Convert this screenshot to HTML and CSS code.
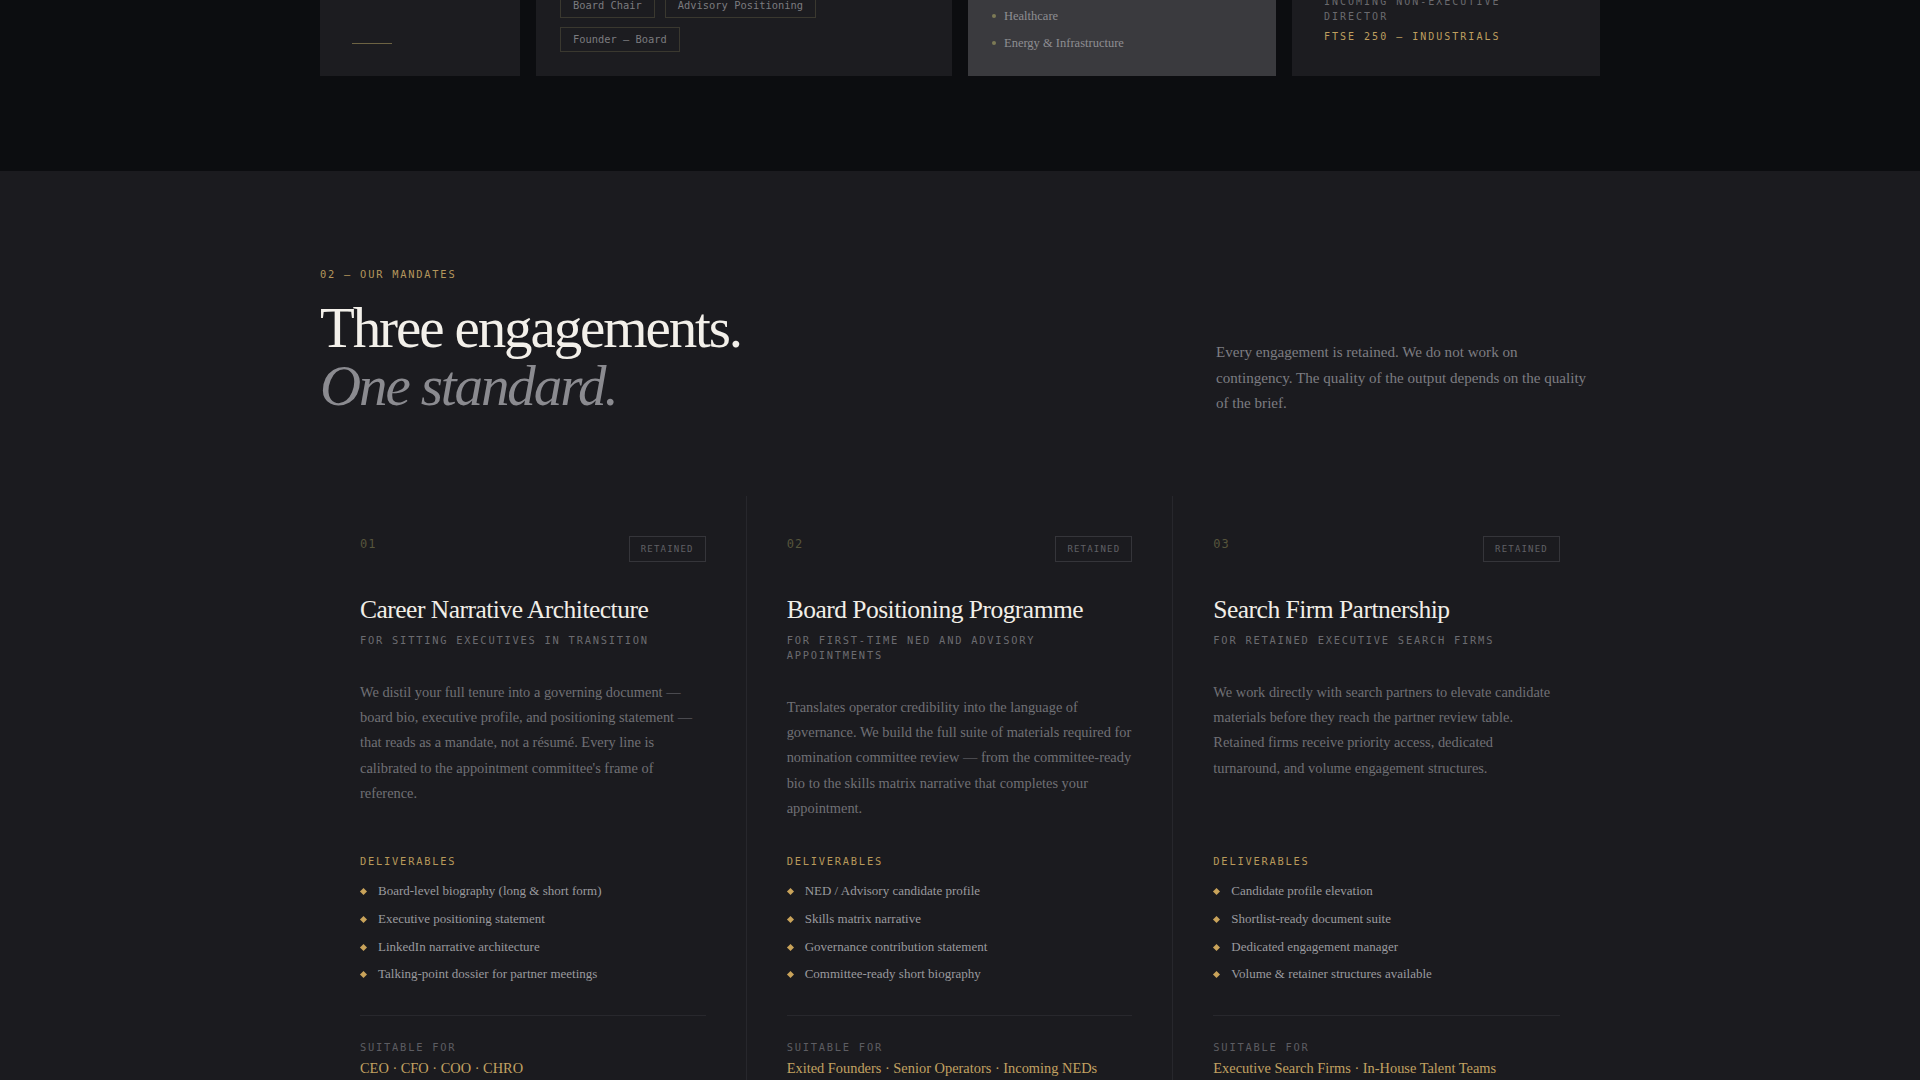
FILE: index.html
```html
<!DOCTYPE html>
<html lang="en">
<head>
  <meta charset="UTF-8" />
  <meta name="viewport" content="width=device-width, initial-scale=1.0" />
  <title>Mandates</title>
  <link rel="stylesheet" href="styles.css">
</head>
<body>

  <!-- tail of the profile strip above -->
  <section class="strip">
    <div class="wrap strip-grid">
      <div class="tile tile-stat">
        <div class="stat-num">94%</div>
        <div class="tile-label">Shortlist rate</div>
        <span class="rule"></span>
      </div>

      <div class="tile">
        <div class="tile-label">Transitions</div>
        <div class="tags">
          <span class="tag">Executive — NED</span>
          <span class="tag">Operator — Investor</span>
          <span class="tag">Board Chair</span>
          <span class="tag">Advisory Positioning</span>
          <span class="tag">Founder — Board</span>
        </div>
      </div>

      <div class="tile tile-lit">
        <div class="tile-label">Sectors</div>
        <ul class="dots">
          <li>Financial Services</li>
          <li>Technology</li>
          <li>Healthcare</li>
          <li>Energy &amp; Infrastructure</li>
        </ul>
      </div>

      <div class="tile tile-wide">
        <div class="tile-label">Recent mandate</div>
        <p class="role">Incoming Non-Executive Director</p>
        <p class="index">FTSE 250 — Industrials</p>
      </div>
    </div>
  </section>

  <section class="mandates">
    <div class="wrap">
      <header class="mandates-head">
        <div>
          <p class="eyebrow">02 — Our Mandates</p>
          <h2 class="headline">Three engagements.<br><em>One standard.</em></h2>
        </div>
        <p class="intro">Every engagement is retained. We do not work on contingency. The quality of the output depends on the quality of the brief.</p>
      </header>

      <div class="mandate-grid">
        <article class="mandate">
          <div class="mandate-top">
            <span class="mandate-no">01</span>
            <span class="badge">Retained</span>
          </div>
          <h3>Career Narrative Architecture</h3>
          <p class="mandate-for">For sitting executives in transition</p>
          <p class="mandate-desc">We distil your full tenure into a governing document — board bio, executive profile, and positioning statement — that reads as a mandate, not a résumé. Every line is calibrated to the appointment committee's frame of reference.</p>
          <div class="deliv">
            <p class="label-gold">Deliverables</p>
            <ul class="diamonds">
              <li>Board-level biography (long &amp; short form)</li>
              <li>Executive positioning statement</li>
              <li>LinkedIn narrative architecture</li>
              <li>Talking-point dossier for partner meetings</li>
            </ul>
          </div>
          <div class="suited">
            <p class="label-dim">Suitable for</p>
            <p class="suited-list">CEO · CFO · COO · CHRO</p>
          </div>
        </article>

        <article class="mandate">
          <div class="mandate-top">
            <span class="mandate-no">02</span>
            <span class="badge">Retained</span>
          </div>
          <h3>Board Positioning Programme</h3>
          <p class="mandate-for">For first-time NED and advisory appointments</p>
          <p class="mandate-desc">Translates operator credibility into the language of governance. We build the full suite of materials required for nomination committee review — from the committee-ready bio to the skills matrix narrative that completes your appointment.</p>
          <div class="deliv">
            <p class="label-gold">Deliverables</p>
            <ul class="diamonds">
              <li>NED / Advisory candidate profile</li>
              <li>Skills matrix narrative</li>
              <li>Governance contribution statement</li>
              <li>Committee-ready short biography</li>
            </ul>
          </div>
          <div class="suited">
            <p class="label-dim">Suitable for</p>
            <p class="suited-list">Exited Founders · Senior Operators · Incoming NEDs</p>
          </div>
        </article>

        <article class="mandate">
          <div class="mandate-top">
            <span class="mandate-no">03</span>
            <span class="badge">Retained</span>
          </div>
          <h3>Search Firm Partnership</h3>
          <p class="mandate-for">For retained executive search firms</p>
          <p class="mandate-desc">We work directly with search partners to elevate candidate materials before they reach the partner review table. Retained firms receive priority access, dedicated turnaround, and volume engagement structures.</p>
          <div class="deliv">
            <p class="label-gold">Deliverables</p>
            <ul class="diamonds">
              <li>Candidate profile elevation</li>
              <li>Shortlist-ready document suite</li>
              <li>Dedicated engagement manager</li>
              <li>Volume &amp; retainer structures available</li>
            </ul>
          </div>
          <div class="suited">
            <p class="label-dim">Suitable for</p>
            <p class="suited-list">Executive Search Firms · In-House Talent Teams</p>
          </div>
        </article>
      </div>
    </div>
  </section>

</body>
</html>
```

FILE: styles.css
```css
* { box-sizing: border-box; }
html, body { overflow: hidden; }
body {
  margin: 0;
  background: #1b1b1f;
  color: #e9e6df;
  font-family: "Liberation Serif", "Times New Roman", serif;
}
p, h2, h3, ul { margin: 0; }
ul { padding: 0; list-style: none; }
.wrap { width: 1280px; margin: 0 auto; }

/* profile strip (only its lower edge is in view) */
.strip {
  height: 171px;
  background: #0c0d10;
  display: flex;
  flex-direction: column;
  justify-content: flex-end;
  padding-bottom: 95px;
  overflow: hidden;
}
.strip-grid {
  flex-shrink: 0;
  display: grid;
  grid-template-columns: 200px 416px 1fr 1fr;
  gap: 16px;
}
.tile {
  background: #1c1c20;
  padding: 24px;
  display: flex;
  flex-direction: column;
  justify-content: flex-end;
}
.tile-stat, .tile-wide { padding: 32px; }
.tile-lit { background: #3a3a3e; padding-bottom: 23px; }
.tile-label {
  font: 10.4px/14px "DejaVu Sans Mono", monospace;
  letter-spacing: 0.17em;
  text-transform: uppercase;
  color: #6a6a6e;
  margin-bottom: 40px;
}
.stat-num { font-size: 40px; line-height: 1; color: #f1eee7; margin-bottom: 8px; }
.tile-stat .tile-label { margin-bottom: 0; }
.rule {
  display: block;
  width: 40px;
  height: 1px;
  background: #6d6343;
  margin-top: 56px;
}

.tags { display: flex; flex-wrap: wrap; gap: 9px 10px; }
.tag {
  font: 10.4px/11px "DejaVu Sans Mono", monospace;
  color: #7b7b7f;
  border: 1px solid #3a382f;
  padding: 6px 12px;
}

.dots { display: flex; flex-direction: column; gap: 7px; }
.dots li {
  display: flex;
  align-items: center;
  gap: 8px;
  font-size: 12.5px;
  line-height: 20px;
  color: #8e8e92;
}
.dots li::before {
  content: "";
  width: 4px;
  height: 4px;
  border-radius: 50%;
  background: #7c7a56;
  flex-shrink: 0;
}

.role, .index {
  font: 10px/15px "DejaVu Sans Mono", monospace;
  letter-spacing: 2px;
  text-transform: uppercase;
  color: #6a6a6e;
}
.index { color: #bf9f5f; margin-top: 5px; }

/* mandates */
.mandates { padding-top: 96px; }
.mandates-head {
  display: flex;
  justify-content: space-between;
  align-items: flex-end;
  margin-bottom: 81px;
}
.eyebrow {
  font: 10.4px/14px "DejaVu Sans Mono", monospace;
  letter-spacing: 0.17em;
  text-transform: uppercase;
  color: #b4965c;
  margin-bottom: 18px;
}
.headline {
  font-weight: 400;
  font-size: 57px;
  line-height: 58px;
  letter-spacing: -0.037em;
  color: #f3f0ea;
}
.headline em { color: #8b8b90; }
.intro {
  width: 376px;
  margin-right: 8px;
  margin-bottom: -2px;
  font-size: 15.1px;
  line-height: 1.7;
  color: #7d7d82;
}

.mandate-grid { display: grid; grid-template-columns: repeat(3, 1fr); }
.mandate {
  padding: 40px;
  display: flex;
  flex-direction: column;
  border-right: 1px solid #27272c;
}
.mandate:last-child { border-right: none; }
.mandate-top { display: flex; justify-content: space-between; align-items: flex-start; }
.mandate-no {
  font: 12px/17px "DejaVu Sans Mono", monospace;
  letter-spacing: 1px;
  color: #57553c;
}
.badge {
  font: 9px/10px "DejaVu Sans Mono", monospace;
  letter-spacing: 1.2px;
  text-transform: uppercase;
  color: #606065;
  border: 1px solid #35353a;
  padding: 7px 11px;
}
.mandate h3 {
  margin-top: 32px;
  font-weight: 400;
  font-size: 25.5px;
  line-height: 31px;
  letter-spacing: -0.02em;
  color: #f1eee7;
}
.mandate-for {
  margin-top: 8px;
  font: 10.4px/15px "DejaVu Sans Mono", monospace;
  letter-spacing: 0.17em;
  text-transform: uppercase;
  color: #6b6b70;
}
.mandate-desc {
  margin-top: 32px;
  flex-grow: 1;
  font-size: 14.4px;
  line-height: 1.75;
  color: #707075;
}
.deliv { margin-top: 33px; }
.label-gold, .label-dim {
  font: 10.4px/14px "DejaVu Sans Mono", monospace;
  letter-spacing: 0.17em;
  text-transform: uppercase;
}
.label-gold { color: #b8995a; margin-bottom: 13px; }
.label-dim { color: #5d5d62; margin-bottom: 4px; }
.diamonds { display: flex; flex-direction: column; gap: 7px; }
.diamonds li {
  display: flex;
  align-items: center;
  gap: 12px;
  font-size: 13px;
  line-height: 1.6;
  color: #9a9a9e;
}
.diamonds li::before {
  content: "";
  width: 5px;
  height: 5px;
  margin-left: 1px;
  background: #c9a35a;
  transform: rotate(45deg);
  flex-shrink: 0;
}
.suited {
  margin-top: 30px;
  border-top: 1px solid #28282d;
  padding-top: 24px;
}
.suited-list {
  font-size: 14.4px;
  line-height: 1.5;
  color: #c2a262;
}
```
